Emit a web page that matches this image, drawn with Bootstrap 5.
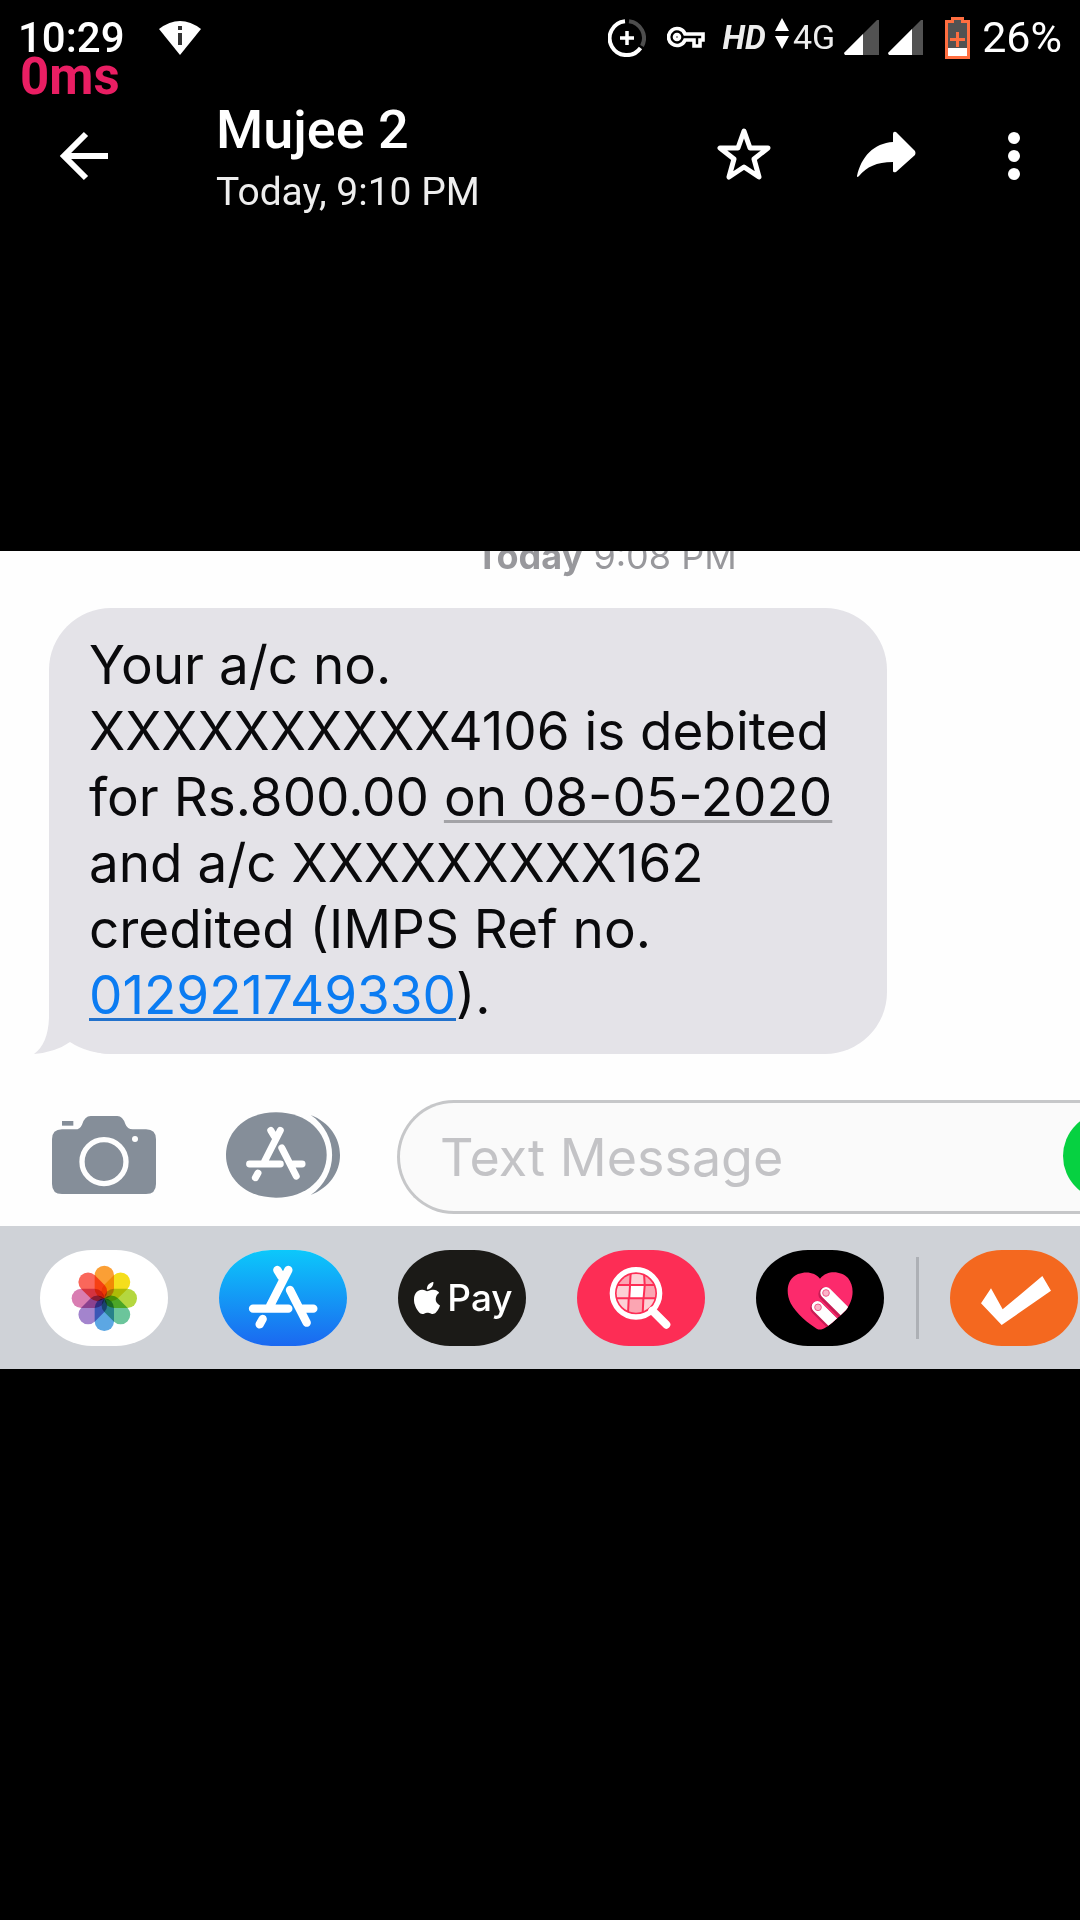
<!DOCTYPE html>
<html lang="en">
<head>
<meta charset="utf-8">
<meta name="viewport" content="width=device-width, initial-scale=1">
<title>Mujee 2</title>
<link rel="stylesheet" href="https://cdn.jsdelivr.net/npm/bootstrap@5.3.0/dist/css/bootstrap.min.css">
<style>
body{background:#000;color:#fff;font-family:Roboto,"Liberation Sans",sans-serif}
svg{display:block;flex:none}
.viewer{overflow-x:hidden}
.half{flex:1 1 0}
.icon-btn{background:none;border:0;padding:0;color:#fff;display:flex;align-items:center;justify-content:center;height:96px}
.statusbar{height:75px;padding:0 18px;font-size:43px;line-height:75px}
.clock{font-size:42px;font-weight:500}
.wifi{margin-left:34px}
.key{margin:0 1px 0 21px}
.updown{margin:0 0 8px 9px}
.signal{margin-left:9px}
.battery{margin:0 12px 0 22px}
.ping{position:absolute;left:20px;top:47px;font-size:51px;line-height:60px;font-weight:700;color:#e91e63}
.hd{font-size:33px;font-weight:700;font-style:italic;color:#eee}
.net{font-size:34px;color:#eee}
.toolbar{height:162px;padding-right:9px}
.back{width:168px}
.act{width:142px}
.more{width:114px}
.names{padding-top:5px}
.title{font-size:54px;line-height:66px;font-weight:500}
.subtitle{font-size:39px;line-height:58px;color:#eee}
.photo{background:#fefefe;color:#0a0a0c;font-family:Inter,"Liberation Sans",sans-serif;overflow:hidden}
.stamp{height:57px;line-height:44px;font-size:36px;color:#98989c;padding-left:132px}
.stamp span{margin-top:-17px}
.bubble{position:relative;width:838px;max-width:100%;margin-left:49px;padding:24px 42px 26px 40px;background:#e4e3e8;border-radius:62px;font-size:53px;line-height:66px}
.bubble p{margin:0}
.tail{position:absolute;left:-15px;bottom:0}
.dateref{color:inherit;text-decoration:underline #a3a3a7 3px;text-underline-offset:4px;text-decoration-skip-ink:none}
.refno{color:#0b7cf2;text-decoration:underline #2272cc 3px;text-underline-offset:4px;text-decoration-skip-ink:none}
.compose{padding:46px 0 12px 52px}
.compose .icon-btn{height:90px;padding-bottom:4px}
.compose .apps{margin-left:70px}
.field{position:relative;margin-left:57px;height:114px}
.field input{height:114px;border:3px solid #c6c7c9;border-right:0;border-radius:57px 0 0 57px;background:#fafafa;padding:0 120px 0 40px;font-size:52px;color:#0a0a0c}
.field input::placeholder{color:#c3c3c6;opacity:1}
.send{position:absolute;right:-71px;top:12px;width:88px;height:88px;border:0;border-radius:50%;background:#06d141}
.dock{height:143px;background:#cfd2d7;padding-left:40px;gap:51px}
.pill{width:128px;height:96px;border:0;padding:0;border-radius:52px/48px;overflow:hidden;display:flex;align-items:center;justify-content:center;flex:none}
.pill.pay{background:#1b1a17}
.pill.search{background:#fd2d55}
.pill.check{background:#f4681f}
.flower g{mix-blend-mode:multiply}
.paytxt{font-size:37px;line-height:40px;font-weight:500;color:#fff}
.bar{width:3px;height:82px;background:#adb0b5;margin:0 -20px 0 -19px;flex:none}
</style>
</head>
<body>
<div class="viewer d-flex flex-column min-vh-100">
  <header class="half">
    <div class="statusbar position-relative d-flex align-items-center">
      <span class="clock">10:29</span>
      <svg class="wifi" width="42" height="34" viewBox="0 0 42 34" role="img" aria-label="Wi-Fi"><path d="M0 8Q21-8 42 8L21 34Z" fill="#fff"/><path d="M19 5h4v4h-4zM19 12h4v12h-4z" fill="#333"/></svg>
      <svg class="ms-auto" width="38" height="38" viewBox="0 0 38 38" fill="none" stroke-width="4"><path d="M21 2.200A17 17 0 0 1 34 27" stroke="#4d4d4d"/><path d="M17 2.200A17 17 0 1 0 32.500 29" stroke="#fff"/><path d="M19 12v14M12 19h14" stroke="#fff" stroke-width="3.500"/></svg>
      <svg class="key" width="38" height="24" viewBox="0 0 38 24" fill="none" stroke="#fff" stroke-width="3.600"><path d="M18 8H36V14H33V20H27V14H18A8.500 8.500 0 1 1 18 8Z"/><circle cx="10" cy="11" r="2.500"/></svg>
      <span class="hd ms-3">HD</span>
      <svg class="updown" width="14" height="32" viewBox="0 0 14 32" fill="#fff"><path d="M7 0L14 13H0ZM0 18H14L7 31Z"/></svg>
      <span class="net ms-1">4G</span>
      <svg class="signal" width="35" height="35" viewBox="0 0 35 35"><path d="M0 33L33 0h2v35H1Z" fill="#525252"/><path d="M0 33L19 14v21H1Z" fill="#fff"/></svg>
      <svg class="signal" width="35" height="35" viewBox="0 0 35 35"><path d="M0 33L33 0h2v35H1Z" fill="#525252"/><path d="M0 33L24 9v26H1Z" fill="#fff"/></svg>
      <svg class="battery" width="25" height="42" viewBox="0 0 25 42"><path d="M1 6H7V1H18V6H24V41H1Z" fill="#525252"/><path d="M3 31h19v8H3z" fill="#fff"/><path d="M1.500 4.500H7.500V1.500H17.500V4.500H23.500V40.500H1.500ZM12.500 15v15M5 22.500h15" fill="none" stroke="#ff6e40" stroke-width="3"/></svg>
      <span>26%</span>
      <span class="ping">0ms</span>
    </div>
    <div class="toolbar d-flex align-items-center">
      <button class="icon-btn back" type="button" aria-label="Back"><svg width="50" height="50" viewBox="0 0 50 50" fill="none" stroke="#fff" stroke-width="6"><path d="M27 3L5 25L27 47M4 25H49"/></svg></button>
      <div class="names ms-5">
        <div class="title">Mujee 2</div>
        <div class="subtitle">Today, 9:10 PM</div>
      </div>
      <button class="icon-btn act ms-auto" type="button" aria-label="Star"><svg width="56" height="58" viewBox="0 0 56 58" fill="none" stroke="#fff" stroke-width="5" stroke-linejoin="round"><path d="M28 4L34 21H52L38 32L43 50L28 40L13 50L18 32L4 21H22Z"/></svg></button>
      <button class="icon-btn act" type="button" aria-label="Share"><svg width="60" height="50" viewBox="0 0 60 50" fill="#fff"><path d="M1 45C5 26 18 12 37 11V3Q37 0 40 1L59 20Q60 22 59 24L40 41Q37 42 37 40V31C20 31 11 36 3 45Q1 47 1 45Z"/></svg></button>
      <button class="icon-btn more" type="button" aria-label="More options"><svg width="12" height="48" viewBox="0 0 12 48" fill="#fff"><circle cx="6" cy="6" r="6"/><circle cx="6" cy="24" r="6"/><circle cx="6" cy="42" r="6"/></svg></button>
    </div>
  </header>

  <main class="photo">
    <div class="stamp d-flex justify-content-center"><span><b>Today</b> 9:08 PM</span></div>
    <div class="bubble">
      <svg class="tail" width="80" height="60" viewBox="0 0 80 60" fill="#e4e3e8"><path d="M15 0V24Q14 50 0 60Q22 58 36 48Q54 60 80 60V0Z"/></svg>
      <p class="position-relative">Your a/c no. XXXXXXXXXX4106 is debited for Rs.800.00 <a class="dateref" href="#">on 08-05-2020</a> and a/c XXXXXXXXX162 credited (IMPS Ref no. <a class="refno" href="#">012921749330</a>).</p>
    </div>
    <form class="compose d-flex align-items-center">
      <button class="icon-btn" type="button" aria-label="Camera"><svg width="104" height="78" viewBox="0 0 312 234"><path d="M30 15h34v14H30z" fill="#858e99"/><path d="M30 40H70Q84 40 90 26Q98 0 116 0H196Q212 0 220 24Q226 40 242 40H282Q312 40 312 70V204Q312 234 282 234H30Q0 234 0 204V70Q0 40 30 40Z" fill="#858e99"/><circle cx="156" cy="137" r="66" fill="none" stroke="#fefefe" stroke-width="16"/><circle cx="249" cy="69" r="9" fill="#fefefe"/></svg></button>
      <button class="icon-btn apps" type="button" aria-label="Apps"><svg width="114" height="86" viewBox="0 0 342 256"><path d="M254 8C310 30 342 76 342 128S310 226 254 248C340 190 340 66 254 8Z" fill="#858e99"/><path d="M150 0C244 0 302 60 302 128S244 256 150 256S0 196 0 128S56 0 150 0Z" fill="#858e99"/><g transform="translate(-18 2) scale(.87)" fill="none" stroke="#fff" stroke-width="24" stroke-linecap="round"><path d="M208 60L153 168M175 60L187 80M213 120L263 218M102 176H208M252 176H283M131 207L122 223"/></g></svg></button>
      <div class="field flex-grow-1">
        <label class="visually-hidden" for="msg">Message</label>
        <input id="msg" class="w-100 d-block" type="text" placeholder="Text Message">
        <button class="send" type="button" aria-label="Send"></button>
      </div>
    </form>
    <nav class="dock d-flex align-items-center" aria-label="Apps">
      <button class="pill bg-white" type="button" aria-label="Photos"><svg class="flower" width="128" height="96" viewBox="0 0 384 288"><g transform="translate(193 145)">
        <g fill="#fb9f35"><rect x="-29" y="-98" width="58" height="98" rx="29"/></g>
        <g fill="#f5de1c"><rect x="-29" y="-98" width="58" height="98" rx="29" transform="rotate(45)"/></g>
        <g fill="#b4d73f"><rect x="-29" y="-98" width="58" height="98" rx="29" transform="rotate(90)"/></g>
        <g fill="#6bc59b"><rect x="-29" y="-98" width="58" height="98" rx="29" transform="rotate(135)"/></g>
        <g fill="#5ca7e3"><rect x="-29" y="-98" width="58" height="98" rx="29" transform="rotate(180)"/></g>
        <g fill="#a384cd"><rect x="-29" y="-98" width="58" height="98" rx="29" transform="rotate(225)"/></g>
        <g fill="#d97db2"><rect x="-29" y="-98" width="58" height="98" rx="29" transform="rotate(270)"/></g>
        <g fill="#fa675b"><rect x="-29" y="-98" width="58" height="98" rx="29" transform="rotate(315)"/></g></g></svg></button>
      <button class="pill" type="button" aria-label="App Store"><svg width="128" height="96" viewBox="0 0 384 288"><defs><linearGradient id="sky" x2="0" y2="1"><stop offset="0" stop-color="#0cc8fb"/><stop offset="1" stop-color="#1b68f0"/></linearGradient></defs><path d="M0 0H384V288H0Z" fill="url(#sky)"/><path d="M208 60L153 168M175 60L187 80M213 120L263 218M102 176H208M252 176H283M131 207L122 223" fill="none" stroke="#fff" stroke-width="25" stroke-linecap="round"/></svg></button>
      <button class="pill pay" type="button"><svg width="32" height="32" viewBox="0 0 16 16" fill="#fff" role="img" aria-label="Apple"><path d="M11.182.008C11.148-.03 9.923.023 8.857 1.180c-1.066 1.156-.902 2.482-.878 2.516s1.520.087 2.475-1.258.762-2.391.728-2.430m3.314 11.733c-.048-.096-2.325-1.234-2.113-3.422s1.675-2.789 1.698-2.854-.597-.790-1.254-1.157a3.700 3.700 0 0 0-1.563-.434c-.108-.003-.483-.095-1.254.116-.508.139-1.653.589-1.968.607-.316.018-1.256-.522-2.267-.665-.647-.125-1.333.131-1.824.328-.490.196-1.422.754-2.074 2.237-.652 1.482-.311 3.830-.067 4.560s.625 1.924 1.273 2.796c.576.984 1.340 1.667 1.659 1.899s1.219.386 1.843.067c.502-.308 1.408-.485 1.766-.472.357.013 1.061.154 1.782.539.571.197 1.111.115 1.652-.105.541-.221 1.324-1.059 2.238-2.758q.520-1.185.473-1.282"/></svg><span class="paytxt ms-1">Pay</span></button>
      <button class="pill search" type="button" aria-label="Image search"><svg width="128" height="96" viewBox="0 0 384 288"><defs><clipPath id="lens"><circle cx="177" cy="130" r="58"/></clipPath></defs><g clip-path="url(#lens)"><path d="M115 70H158L156 102H115ZM204 70H240V102H206ZM206 108H240V142H203ZM158 148H196L194 192H156Z" fill="#fba5b2"/><path d="M164 70H198L200 102H162ZM115 108H156L154 142H115ZM115 148H152L150 192H115ZM202 148H240V192H200Z" fill="#fdd0d5"/><path d="M162 108H200L197 142H160Z" fill="#fff"/></g><circle cx="177" cy="130" r="71" fill="none" stroke="#fff" stroke-width="16"/><path d="M226 182L268 224" stroke="#fff" stroke-width="24" stroke-linecap="round"/></svg></button>
      <button class="pill bg-black" type="button" aria-label="Digital Touch"><svg width="128" height="96" viewBox="0 0 384 288"><defs><clipPath id="heart"><path d="M192 86C216 58 256 64 276 84C298 112 292 152 270 180C244 206 212 234 198 238Q190 240 182 236C158 222 120 190 104 160C86 122 96 84 126 72C152 62 178 68 192 86Z"/></clipPath></defs><path d="M192 86C216 58 256 64 276 84C298 112 292 152 270 180C244 206 212 234 198 238Q190 240 182 236C158 222 120 190 104 160C86 122 96 84 126 72C152 62 178 68 192 86Z" fill="#fc2a6c"/><g clip-path="url(#heart)" fill="none" stroke-linecap="round"><path d="M208 132L290 214M184 174L266 256" stroke="#c81c54" stroke-width="42"/><path d="M210 128L290 208M184 170L264 250" stroke="#fff" stroke-width="34"/></g><g fill="#fbb3c8" stroke="#ee5c8a" stroke-width="3"><circle cx="210" cy="129" r="10"/><circle cx="186" cy="172" r="10"/></g></svg></button>
      <div class="bar"></div>
      <button class="pill check" type="button" aria-label="Check"><svg width="128" height="96" viewBox="0 0 384 288"><path d="M123 115L158 178L277 78L303 122L155 225L93 160Z" fill="#fff"/></svg></button>
    </nav>
  </main>
  <div class="half"></div>
</div>
<script src="https://cdn.jsdelivr.net/npm/bootstrap@5.3.0/dist/js/bootstrap.bundle.min.js"></script>
</body>
</html>
